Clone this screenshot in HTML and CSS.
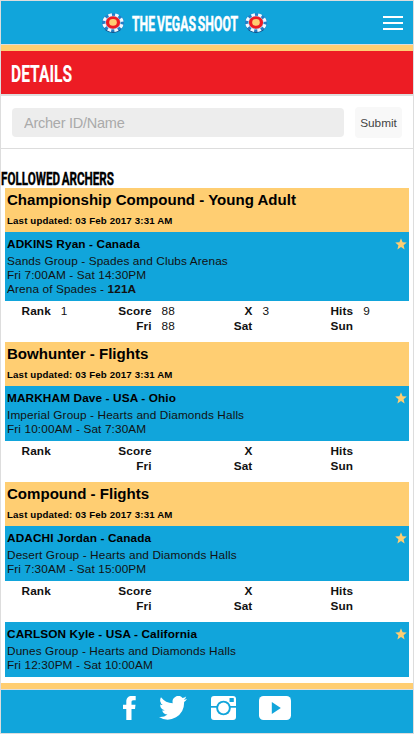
FILE: index.html
```html
<!DOCTYPE html>
<html lang="en">
<head>
  <meta charset="UTF-8">
  <title>The Vegas Shoot</title>
  <link rel="stylesheet" href="styles.css">
</head>
<body>
  <svg class="sprite">
    <symbol id="chip" viewBox="0 0 22 20">
      <ellipse cx="11" cy="10.6" rx="10.5" ry="9.4" fill="#174f86"/>
      <ellipse cx="11" cy="9.6" rx="11" ry="9.4" fill="#247fc9"/>
      <ellipse cx="11" cy="9.7" rx="9" ry="7.7" fill="none" stroke="#f4faff" stroke-width="3.4" stroke-dasharray="3.5 3.1" stroke-dashoffset="-1.6"/>
      <ellipse cx="11" cy="9.6" rx="7.7" ry="6.8" fill="#b9dcf2"/>
      <ellipse cx="11" cy="9.5" rx="7.1" ry="6.2" fill="#ed1c24"/>
      <ellipse cx="11" cy="9.4" rx="3.8" ry="3.3" fill="#ffce72"/>
    </symbol>
    <symbol id="star" viewBox="0 0 12 12">
      <path d="M6 .3l1.6 3.9 4.2.3-3.2 2.7 1 4.2L6 9.1l-3.6 2.3 1-4.2L.2 4.5l4.2-.3z"/>
    </symbol>
  </svg>

  <div class="page">
    <header class="header">
      <div class="brand">
        <svg class="chip"><use href="#chip"/></svg>
        <svg class="title brand-title"><text x="0" y="15" textLength="106" lengthAdjust="spacingAndGlyphs">THE VEGAS SHOOT</text></svg>
        <svg class="chip"><use href="#chip"/></svg>
      </div>
      <div class="menu"><i></i><i></i><i></i></div>
    </header>
    <div class="bar"></div>
    <div class="banner">
      <svg class="title banner-title"><text x="0" y="17" textLength="61" lengthAdjust="spacingAndGlyphs">DETAILS</text></svg>
    </div>
    <form class="search">
      <input type="text" placeholder="Archer ID/Name">
      <button type="button">Submit</button>
    </form>

    <main class="content">
      <svg class="title followed"><text x="0" y="13" textLength="113" lengthAdjust="spacingAndGlyphs">FOLLOWED ARCHERS</text></svg>

      <section class="division">
        <h2>Championship Compound - Young Adult</h2>
        <p>Last updated: 03 Feb 2017 3:31 AM</p>
      </section>
      <div class="archer">
        <svg class="star"><use href="#star"/></svg>
        <h3>ADKINS Ryan - Canada</h3>
        <p>Sands Group - Spades and Clubs Arenas</p>
        <p>Fri 7:00AM - Sat 14:30PM</p>
        <p>Arena of Spades - <b>121A</b></p>
      </div>
      <div class="stats">
        <b>Rank</b><span>1</span><b>Score</b><span>88</span><b>X</b><span>3</span><b>Hits</b><span>9</span>
        <b></b><span></span><b>Fri</b><span>88</span><b>Sat</b><span></span><b>Sun</b><span></span>
      </div>

      <section class="division">
        <h2>Bowhunter - Flights</h2>
        <p>Last updated: 03 Feb 2017 3:31 AM</p>
      </section>
      <div class="archer">
        <svg class="star"><use href="#star"/></svg>
        <h3>MARKHAM Dave - USA - Ohio</h3>
        <p>Imperial Group - Hearts and Diamonds Halls</p>
        <p>Fri 10:00AM - Sat 7:30AM</p>
      </div>
      <div class="stats">
        <b>Rank</b><span></span><b>Score</b><span></span><b>X</b><span></span><b>Hits</b><span></span>
        <b></b><span></span><b>Fri</b><span></span><b>Sat</b><span></span><b>Sun</b><span></span>
      </div>

      <section class="division">
        <h2>Compound - Flights</h2>
        <p>Last updated: 03 Feb 2017 3:31 AM</p>
      </section>
      <div class="archer">
        <svg class="star"><use href="#star"/></svg>
        <h3>ADACHI Jordan - Canada</h3>
        <p>Desert Group - Hearts and Diamonds Halls</p>
        <p>Fri 7:30AM - Sat 15:00PM</p>
      </div>
      <div class="stats">
        <b>Rank</b><span></span><b>Score</b><span></span><b>X</b><span></span><b>Hits</b><span></span>
        <b></b><span></span><b>Fri</b><span></span><b>Sat</b><span></span><b>Sun</b><span></span>
      </div>
      <div class="archer">
        <svg class="star"><use href="#star"/></svg>
        <h3>CARLSON Kyle - USA - California</h3>
        <p>Dunes Group - Hearts and Diamonds Halls</p>
        <p>Fri 12:30PM - Sat 10:00AM</p>
      </div>
    </main>

    <div class="bar"></div>
    <footer class="footer">
      <svg class="facebook" viewBox="0 0 13 24"><path d="M3.300 24V13H0V8.800h3.300V5.500C3.300 2 5.400 0 8.700 0h4v4.200h-2.200C8.900 4.200 8.500 5 8.500 6.100v2.700h4L12 13H8.500v11z"/></svg>
      <svg class="twitter" viewBox="0 0 24 20" preserveAspectRatio="none"><path d="M24 2.400a10 10 0 0 1-2.800.8A5 5 0 0 0 23.300.4a10 10 0 0 1-3.100 1.200 4.900 4.900 0 0 0-8.400 4.500A14 14 0 0 1 1.700 1a4.900 4.900 0 0 0 1.500 6.600 4.900 4.900 0 0 1-2.200-.6 4.900 4.900 0 0 0 3.900 4.900 5 5 0 0 1-2.200.1 4.900 4.900 0 0 0 4.600 3.400A9.900 9.900 0 0 1 0 17.500 14 14 0 0 0 21.500 5c1-.7 1.800-1.600 2.500-2.600z"/></svg>
      <svg class="instagram" viewBox="0 0 25 24">
        <rect width="25" height="24" rx="3"/>
        <path class="cut" d="M0 10h25v1.700H0z"/>
        <circle class="cut" cx="12.500" cy="12" r="7.300"/>
        <circle cx="12.500" cy="12" r="5.400"/>
        <rect class="cut" x="18.500" y="2" width="4.300" height="4" rx=".5"/>
      </svg>
      <svg class="youtube" viewBox="0 0 32 24"><rect width="32" height="24" rx="4.500"/><path class="cut" d="M12.800 6v12l9-6z"/></svg>
    </footer>
  </div>
</body>
</html>
```
FILE: styles.css
```css
* {
  box-sizing: border-box;
}
body {
  margin: 0;
  background: #fff;
  color: #111;
  font-family: "Liberation Sans", Arial, sans-serif;
}
h2, h3, p {
  margin: 0;
}
svg {
  display: block;
}
.sprite {
  display: none;
}
.page {
  height: 734px;
  border: 1px solid #ddd;
  display: flex;
  flex-direction: column;
  overflow: hidden;
}
.title {
  font-family: Roboto, sans-serif;
  font-weight: bold;
  word-spacing: -2px;
  fill: #fff;
  stroke: #fff;
  stroke-width: 0.5px;
  overflow: visible;
}
.header {
  height: 44px;
  flex: none;
  background: #11a5db;
  border-bottom: 1px solid #ddd;
  display: grid;
  grid-template-columns: 30px 1fr 30px;
}
.brand {
  grid-column: 2;
  display: flex;
  justify-content: center;
  align-items: flex-start;
  padding: 12px 45px 0 0;
}
.chip {
  width: 22px;
  height: 20px;
}
.brand-title {
  width: 106px;
  height: 15px;
  margin: 3px 7px 0 8px;
  font-size: 21px;
}
.menu {
  width: 20px;
  padding-top: 15px;
  display: flex;
  flex-direction: column;
  gap: 4px;
}
.menu i {
  height: 2px;
  background: #fff;
}
.bar {
  height: 6px;
  flex: none;
  background: #ffce72;
}
.banner {
  height: 45px;
  flex: none;
  padding: 14px 0 0 10px;
  background: #ed1c24;
  border-bottom: 2px solid #ddd;
}
.banner-title {
  width: 61px;
  height: 17px;
  font-size: 23.5px;
  stroke-width: 0.1px;
}
.search {
  height: 53px;
  flex: none;
  display: flex;
  align-items: flex-start;
  gap: 11px;
  padding: 11px 11px 0;
  border-bottom: 1px solid #ddd;
}
.search input {
  width: 332px;
  height: 29px;
  margin-top: 1px;
  padding: 0 12px;
  border: none;
  border-radius: 4px;
  background: #ededed;
  font: 14.5px "Liberation Sans", Arial, sans-serif;
  letter-spacing: -0.25px;
}
.search input::placeholder {
  color: #aaa;
}
.search button {
  width: 47px;
  height: 31px;
  padding: 0;
  border: none;
  border-radius: 4px;
  background: #f8f8f8;
  color: #444;
  font: 11.8px "Liberation Sans", Arial, sans-serif;
}
.content {
  height: 534px;
  flex: none;
  padding: 23px 4px 0;
}
.followed {
  width: 113px;
  height: 13px;
  margin: 0 0 3px -4px;
  font-size: 18px;
  fill: #000;
  stroke: #000;
  stroke-width: 0.4px;
}
.division {
  height: 44px;
  padding: 3px 2px 0;
  background: #ffce72;
  color: #000;
}
.division h2 {
  font-size: 15.05px;
  line-height: 18px;
}
.division p {
  margin-top: 6px;
  font-size: 9.7px;
  letter-spacing: 0.15px;
  font-weight: bold;
  line-height: 12px;
}
.archer {
  padding: 5px 2px;
  background: #11a5db;
  font-size: 11.8px;
  letter-spacing: 0.12px;
  line-height: 14px;
}
.archer h3 {
  margin-bottom: 3px;
  font-size: 11.8px;
  color: #000;
}
.star {
  float: right;
  width: 12px;
  height: 12px;
  margin-top: 1px;
  fill: #ffce72;
}
.stats {
  height: 41px;
  padding-top: 3px;
  display: grid;
  grid-template-columns: repeat(4, 45.8px 55px);
  grid-auto-rows: 15px;
  font-size: 11.8px;
  letter-spacing: 0.1px;
  line-height: 15px;
}
.stats b {
  text-align: right;
}
.stats span {
  padding-left: 10px;
}
.footer {
  height: 44px;
  flex: none;
  padding: 6px 0 0 122px;
  background: #11a5db;
  border-top: 1px solid #ddd;
  display: flex;
  align-items: flex-start;
  fill: #fff;
}
.facebook {
  width: 13px;
  height: 24px;
}
.twitter {
  width: 28px;
  height: 24px;
  margin-left: 23px;
}
.instagram {
  width: 25px;
  height: 24px;
  margin-left: 24px;
}
.youtube {
  width: 32px;
  height: 24px;
  margin-left: 23px;
}
.cut {
  fill: #11a5db;
}
```
